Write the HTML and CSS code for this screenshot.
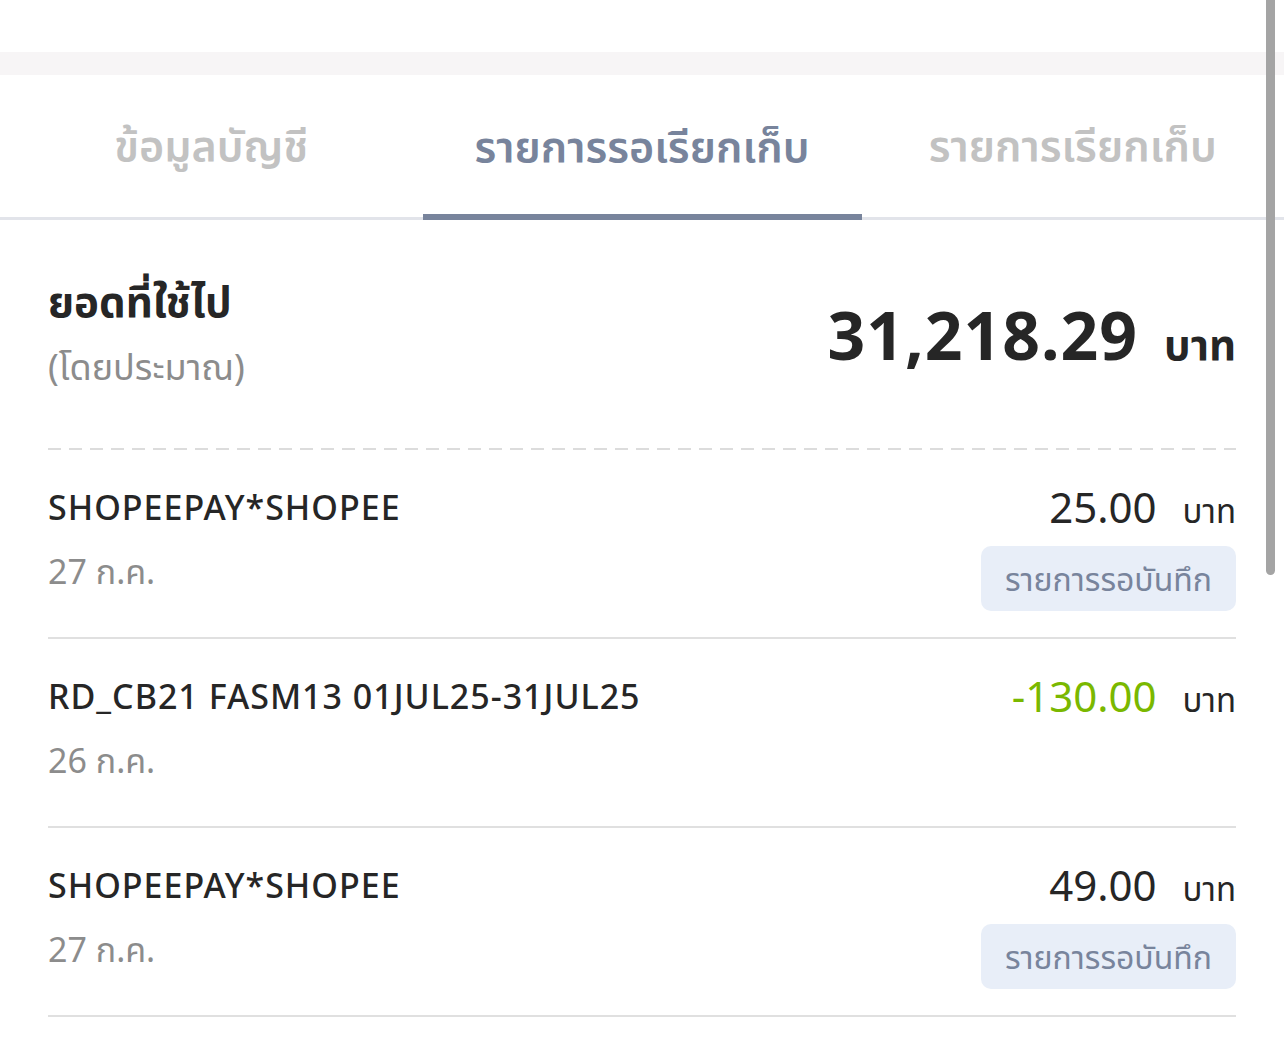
FILE: index.html
```html
<!DOCTYPE html>
<html lang="th">

<head>
    <meta charset="UTF-8">
    <meta name="viewport" content="width=device-width, initial-scale=1.0">
    <title>รายการรอเรียกเก็บ</title>

    <link rel="stylesheet" href="styles.css">
</head>

<body>
    <div class="top-space"></div>
    <div class="top-band"></div>

    <nav class="tabs">
        <div class="tab">ข้อมูลบัญชี</div>
        <div class="tab active">รายการรอเรียกเก็บ</div>
        <div class="tab">รายการเรียกเก็บ</div>
    </nav>

    <section class="content">
        <div class="summary">
            <div class="summary-label">
                <p class="summary-title">ยอดที่ใช้ไป</p>
                <p class="summary-note">(โดยประมาณ)</p>
            </div>
            <div class="summary-amount">
                <span class="big-number">31,218.29</span>
                <span class="big-unit">บาท</span>
            </div>
        </div>

        <div class="dashed"></div>

        <div class="row">
            <div class="row-left">
                <p class="row-title">SHOPEEPAY*SHOPEE</p>
                <p class="row-date">27 ก.ค.</p>
            </div>
            <div class="row-right">
                <p class="amount"><span class="num">25.00</span><span class="unit">บาท</span></p>
                <span class="badge">รายการรอบันทึก</span>
            </div>
        </div>

        <div class="row">
            <div class="row-left">
                <p class="row-title">RD_CB21 FASM13 01JUL25-31JUL25</p>
                <p class="row-date">26 ก.ค.</p>
            </div>
            <div class="row-right">
                <p class="amount"><span class="num green">-130.00</span><span class="unit">บาท</span></p>
            </div>
        </div>

        <div class="row">
            <div class="row-left">
                <p class="row-title">SHOPEEPAY*SHOPEE</p>
                <p class="row-date">27 ก.ค.</p>
            </div>
            <div class="row-right">
                <p class="amount"><span class="num">49.00</span><span class="unit">บาท</span></p>
                <span class="badge">รายการรอบันทึก</span>
            </div>
        </div>
    </section>

    <div class="scrollbar"></div>
</body>

</html>
```

FILE: styles.css
```css
body,
*,
html {
    padding: 0;
    margin: 0;
    box-sizing: border-box;
}

body {
    width: 1284px;
    height: 1050px;
    overflow: hidden;
    background-color: #fff;
    font-family: 'Noto Sans', 'Noto Sans Thai', 'DejaVu Sans', sans-serif;
    color: #262626;
    position: relative;
}

.top-space {
    height: 52px;
    background-color: #fff;
}

.top-band {
    height: 23px;
    background-color: #f7f5f6;
}

.tabs {
    display: flex;
    height: 145px;
    border-bottom: 3px solid #e2e4ea;
}

.tab {
    flex: 1;
    display: flex;
    align-items: center;
    justify-content: center;
    font-size: 43px;
    font-weight: 600;
    color: #c2c2c2;
    padding-top: 2px;
}

.tab.active {
    flex: 0 0 439px;
    color: #78849c;
    box-shadow: inset 0 -6px 0 #78849c;
    margin-bottom: -3px;
}

.content {
    padding: 0 48px;
}

.summary {
    display: flex;
    justify-content: space-between;
    align-items: center;
    padding: 48px 0 48px;
}

.summary-title {
    font-size: 42px;
    font-weight: 700;
    color: #262626;
    line-height: 66px;
}

.summary-note {
    font-size: 36px;
    color: #8c8c8c;
    line-height: 66px;
}

.summary-amount {
    display: flex;
    align-items: baseline;
    gap: 26px;
}

.big-number {
    font-size: 66px;
    font-weight: 700;
    letter-spacing: 1px;
}

.big-unit {
    font-size: 42px;
    font-weight: 700;
}

.dashed {
    height: 2px;
    background-image: linear-gradient(to right, #dcdcdc 13px, transparent 13px);
    background-size: 21px 2px;
}

.row {
    display: flex;
    justify-content: space-between;
    height: 189px;
    padding-top: 32px;
    border-bottom: 2px solid #e0e0e0;
}

.row-title {
    font-size: 34px;
    font-weight: 500;
    letter-spacing: 1px;
    color: #262626;
    line-height: 50px;
}

.row-date {
    font-size: 34px;
    color: #8c8c8c;
    line-height: 50px;
    margin-top: 14px;
}

.row-right {
    display: flex;
    flex-direction: column;
    align-items: flex-end;
}

.amount {
    display: flex;
    align-items: baseline;
    gap: 26px;
    line-height: 50px;
}

.num {
    font-size: 42px;
    color: #262626;
}

.num.green {
    color: #7ab800;
}

.unit {
    font-size: 33px;
}

.badge {
    margin-top: 10px;
    background-color: #e8eef8;
    color: #78849c;
    font-size: 32px;
    border-radius: 10px;
    padding: 10px 24px;
    line-height: 45px;
}

.scrollbar {
    position: absolute;
    top: 0;
    right: 9px;
    width: 9px;
    height: 575px;
    background-color: #a4a4a4;
    border-radius: 0 0 5px 5px;
}
```
